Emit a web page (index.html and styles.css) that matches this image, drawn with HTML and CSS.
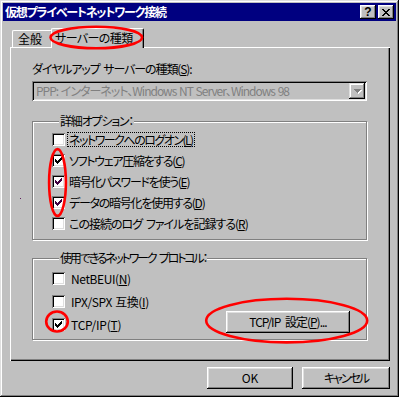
FILE: index.html
```html
<!DOCTYPE html>
<html lang="ja">
<head>
<meta charset="utf-8">
<title>仮想プライベートネットワーク接続</title>
<link rel="stylesheet" href="styles.css">
</head>
<body>
<div class="window">
  <div class="titlebar">
    <span class="title">仮想プライベートネットワーク接続</span>
    <div class="caption-buttons">
      <div class="cap-btn help">?</div>
      <div class="cap-btn close">
        <svg width="8" height="7" viewBox="0 0 8 7" shape-rendering="crispEdges"><path fill="#000" d="M0 0h2v1h-2z M6 0h2v1h-2z M1 1h2v1h-2z M5 1h2v1h-2z M2 2h4v1h-4z M3 3h2v1h-2z M2 4h4v1h-4z M1 5h2v1h-2z M5 5h2v1h-2z M0 6h2v1h-2z M6 6h2v1h-2z"/></svg>
      </div>
    </div>
  </div>
  <div class="body">
    <div class="tabs">
      <div class="tab">全般</div>
      <div class="tab selected">サーバーの種類</div>
    </div>
    <div class="panel">
      <div class="field-label">ダイヤルアップ サーバーの種類(<u>S</u>):</div>
      <div class="combo">
        <span class="combo-text">PPP: インターネット、Windows NT Server、Windows 98</span>
        <span class="combo-btn">
          <svg width="8" height="5" viewBox="0 0 8 5" shape-rendering="crispEdges"><path fill="#fff" d="M1 1h7v1h-7z M2 2h5v1h-5z M3 3h3v1h-3z M4 4h1v1h-1z"/><path fill="#808080" d="M0 0h7v1h-7z M1 1h5v1h-5z M2 2h3v1h-3z M3 3h1v1h-1z"/></svg>
        </span>
      </div>

      <fieldset class="group group-options">
        <legend>詳細オプション：</legend>
        <div class="check-row"><span class="checkbox"></span><span class="check-label focus">ネットワークへのログオン(<u>L</u>)</span></div>
        <div class="check-row"><span class="checkbox checked"><svg width="7" height="7" viewBox="0 0 7 7" shape-rendering="crispEdges"><path d="M6 0h1v1h-1z M5 1h2v1h-2z M0 2h1v1h-1z M4 2h3v1h-3z M0 3h2v1h-2z M3 3h3v1h-3z M0 4h5v1h-5z M1 5h3v1h-3z M2 6h1v1h-1z"/></svg></span><span class="check-label ls13">ソフトウェア圧縮をする(<u>C</u>)</span></div>
        <div class="check-row"><span class="checkbox checked purple"><svg width="7" height="7" viewBox="0 0 7 7" shape-rendering="crispEdges"><path d="M6 0h1v1h-1z M5 1h2v1h-2z M0 2h1v1h-1z M4 2h3v1h-3z M0 3h2v1h-2z M3 3h3v1h-3z M0 4h5v1h-5z M1 5h3v1h-3z M2 6h1v1h-1z"/></svg></span><span class="check-label ls13">暗号化パスワードを使う(<u>E</u>)</span></div>
        <div class="check-row"><span class="checkbox checked purple"><svg width="7" height="7" viewBox="0 0 7 7" shape-rendering="crispEdges"><path d="M6 0h1v1h-1z M5 1h2v1h-2z M0 2h1v1h-1z M4 2h3v1h-3z M0 3h2v1h-2z M3 3h3v1h-3z M0 4h5v1h-5z M1 5h3v1h-3z M2 6h1v1h-1z"/></svg></span><span class="check-label ls12">データの暗号化を使用する(<u>D</u>)</span></div>
        <div class="check-row"><span class="checkbox"></span><span class="check-label ls10">この接続のログ ファイルを記録する(<u>R</u>)</span></div>
      </fieldset>

      <fieldset class="group group-protocols">
        <legend>使用できるネットワーク プロトコル：</legend>
        <div class="check-row tall"><span class="checkbox"></span><span class="check-label latin">NetBEUI(<u>N</u>)</span></div>
        <div class="check-row tall"><span class="checkbox"></span><span class="check-label latin">IPX/SPX 互換(<u>I</u>)</span></div>
        <div class="check-row tall"><span class="checkbox checked"><svg width="7" height="7" viewBox="0 0 7 7" shape-rendering="crispEdges"><path d="M6 0h1v1h-1z M5 1h2v1h-2z M0 2h1v1h-1z M4 2h3v1h-3z M0 3h2v1h-2z M3 3h3v1h-3z M0 4h5v1h-5z M1 5h3v1h-3z M2 6h1v1h-1z"/></svg></span><span class="check-label latin tcp">TCP/IP(<u>T</u>)</span><div class="btn tcp-btn">TCP/IP 設定(<u>P</u>)...</div></div>
      </fieldset>
    </div>
    <div class="dialog-buttons">
      <div class="btn ok">OK</div>
      <div class="btn cancel">キャンセル</div>
    </div>
  </div>
  <svg class="annotations" width="399" height="397" viewBox="0 0 399 397">
    <g fill="none" stroke="#ff0000" stroke-width="2.6">
      <ellipse cx="96.3" cy="37.5" rx="45.8" ry="10.8"/>
      <ellipse cx="57.5" cy="182.5" rx="8.4" ry="33.4"/>
      <ellipse cx="57" cy="321.5" rx="10.8" ry="10"/>
      <ellipse cx="286.7" cy="320.6" rx="80.5" ry="21.8"/>
    </g>
    <rect x="20" y="198" width="1" height="1" fill="#602060"/>
  </svg>
</div>
</body>
</html>
```
FILE: styles.css
```css
* { box-sizing: border-box; }

html, body {
  margin: 0;
  padding: 0;
  background: #c0c0c0;
}

body {
  font-family: "Noto Sans CJK JP", "Liberation Sans", sans-serif;
  font-size: 12px;
  line-height: 14px;
  color: #000;
  font-feature-settings: "palt" 1;
}

u { text-decoration: underline; text-underline-offset: 1px; }

.window {
  position: relative;
  width: 399px;
  height: 397px;
  padding: 3px;
  background: #c0c0c0;
  box-shadow: inset -1px -1px #000, inset 1px 1px #dfdfdf, inset -2px -2px #808080, inset 2px 2px #fff;
  display: flex;
  flex-direction: column;
}

.titlebar {
  height: 18px;
  background: #000080;
  display: flex;
  align-items: center;
  justify-content: space-between;
  padding: 0 2px 0 2px;
}
.title {
  color: #fff;
  font-weight: bold;
  font-size: 12px;
  letter-spacing: -1.2px;
}
.caption-buttons {
  display: flex;
  gap: 2px;
}
.cap-btn {
  width: 16px;
  height: 14px;
  background: #c0c0c0;
  box-shadow: inset -1px -1px #000, inset 1px 1px #fff, inset -2px -2px #808080, inset 2px 2px #dfdfdf;
  display: flex;
  align-items: center;
  justify-content: center;
}
.cap-btn.help {
  font-family: "Liberation Sans", sans-serif;
  font-weight: bold;
  font-size: 12px;
  line-height: 12px;
  padding-bottom: 1px;
}
.cap-btn.close svg { display: block; }

.body {
  flex: 1;
  margin: 7px 6px 0 7px;
  display: flex;
  flex-direction: column;
}

.tabs {
  height: 19px;
  display: flex;
  align-items: flex-end;
  padding-left: 2px;
}
.tab {
  height: 17px;
  border: 1px solid #fff;
  border-right-color: #000;
  border-bottom: none;
  border-radius: 2px 2px 0 0;
  box-shadow: inset -1px 0 #808080;
  background: #c0c0c0;
  line-height: 15px;
  width: 41px;
  padding-left: 5px;
  white-space: nowrap;
}
.tab.selected {
  position: relative;
  z-index: 2;
  height: 20px;
  width: 93px;
  margin: 0 0 -1px -2px;
  padding-left: 3px;
  line-height: 17px;
  letter-spacing: -0.6px;
}

.panel {
  height: 314px;
  padding: 15px 23px 0 22px;
  box-shadow: inset 1px 1px #fff, inset -1px -1px #000, inset -2px -2px #808080;
}

.field-label {
  height: 14px;
  white-space: nowrap;
  letter-spacing: -1.1px;
  word-spacing: 2px;
}

.combo {
  margin-top: 5px;
  width: 335px;
  height: 20px;
  background: #c0c0c0;
  box-shadow: inset 1px 1px #808080, inset -1px -1px #fff, inset 2px 2px #000, inset -2px -2px #dfdfdf;
  display: flex;
  align-items: center;
  justify-content: space-between;
  padding: 2px 2px 2px 4px;
}
.combo-text {
  color: #808080;
  white-space: nowrap;
  letter-spacing: -1px;
  word-spacing: 1px;
}
.combo-btn {
  width: 16px;
  height: 16px;
  box-shadow: inset -1px -1px #000, inset 1px 1px #dfdfdf, inset -2px -2px #808080, inset 2px 2px #fff;
  display: flex;
  align-items: center;
  justify-content: center;
}
.combo-btn svg { display: block; margin-left: 1px; }

.group {
  width: 335px;
  margin: 0;
  border: 1px solid #808080;
  box-shadow: inset 1px 1px #fff, 1px 1px #fff;
  min-width: 0;
}
.group legend {
  margin-left: 7px;
  padding: 0 1px;
  line-height: 14px;
  background: #c0c0c0;
  position: relative;
  white-space: nowrap;
}
.group-options legend { letter-spacing: -1.2px; }
.group-protocols legend { letter-spacing: -2.2px; word-spacing: 3px; }
.group-options {
  margin-top: 13px;
  padding: 1px 0 5px 19px;
}
.group-protocols {
  margin-top: 11px;
  padding: 2px 0 3px 19px;
}

.check-row {
  height: 21px;
  display: flex;
  align-items: center;
}
.check-row.tall { height: 23px; }

.checkbox {
  flex: none;
  width: 13px;
  height: 13px;
  background: #fff;
  box-shadow: inset 1px 1px #808080, inset -1px -1px #fff, inset 2px 2px #000, inset -2px -2px #dfdfdf;
  display: flex;
  align-items: center;
  justify-content: center;
}
.checkbox svg { display: block; fill: #000; }
.checkbox.purple svg { fill: #400040; }

.check-label {
  margin-left: 3px;
  padding: 0 1px;
  white-space: nowrap;
  line-height: 13px;
}
.check-label.focus { outline: 1px dotted #000; outline-offset: 0; letter-spacing: -1.5px; }
.check-label.ls13 { letter-spacing: -1.3px; }
.check-label.ls12 { letter-spacing: -1.25px; }
.check-label.ls10 { letter-spacing: -1px; word-spacing: 2px; }
.check-label.latin { margin-left: 5px; letter-spacing: -0.4px; word-spacing: 1px; }
.check-label.latin.tcp { letter-spacing: -0.2px; }

.btn {
  height: 22px;
  background: #c0c0c0;
  box-shadow: inset -1px -1px #000, inset 1px 1px #fff, inset -2px -2px #808080, inset 2px 2px #dfdfdf;
  display: flex;
  align-items: center;
  justify-content: center;
  white-space: nowrap;
}
.tcp-btn {
  width: 124px;
  margin-left: auto;
  margin-right: 16px;
  align-self: flex-start;
  margin-top: -2px;
  letter-spacing: -1px;
  word-spacing: 3px;
}

.dialog-buttons {
  margin-top: 6px;
  display: flex;
  justify-content: flex-end;
  gap: 9px;
}
.btn.ok { width: 86px; }
.btn.cancel { width: 88px; letter-spacing: -2px; }

.annotations {
  position: absolute;
  left: 0;
  top: 0;
  z-index: 5;
  pointer-events: none;
}
```
